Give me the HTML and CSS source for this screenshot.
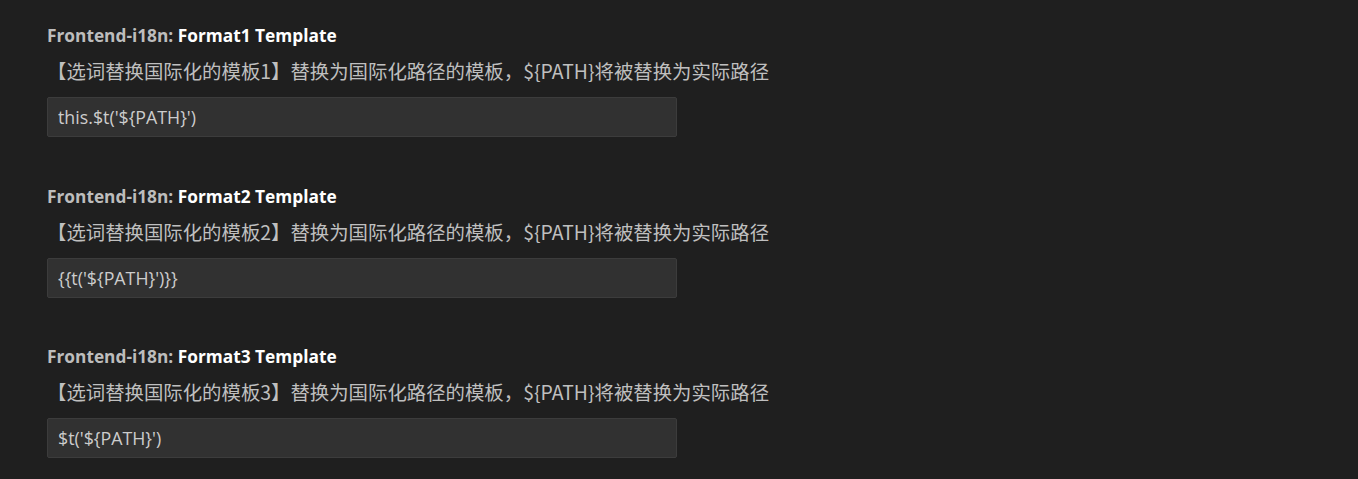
FILE: index.html
```html
<!DOCTYPE html>
<html lang="zh">
<head>
<meta charset="utf-8">
<title>Settings</title>
<link rel="stylesheet" href="styles.css">
</head>
<body>
<div class="settings">
  <div class="setting">
    <div class="setting-title"><span class="category">Frontend-i18n: </span><span class="name">Format1 Template</span></div>
    <div class="setting-desc">【选词替换国际化的模板1】替换为国际化路径的模板，${PATH}将被替换为实际路径</div>
    <div class="setting-input"><input class="text-input" type="text" value="this.$t('${PATH}')"></div>
  </div>
  <div class="setting">
    <div class="setting-title"><span class="category">Frontend-i18n: </span><span class="name">Format2 Template</span></div>
    <div class="setting-desc">【选词替换国际化的模板2】替换为国际化路径的模板，${PATH}将被替换为实际路径</div>
    <div class="setting-input"><input class="text-input" type="text" value="{{t('${PATH}')}}"></div>
  </div>
  <div class="setting">
    <div class="setting-title"><span class="category">Frontend-i18n: </span><span class="name">Format3 Template</span></div>
    <div class="setting-desc">【选词替换国际化的模板3】替换为国际化路径的模板，${PATH}将被替换为实际路径</div>
    <div class="setting-input"><input class="text-input" type="text" value="$t('${PATH}')"></div>
  </div>
</div>
</body>
</html>
```
FILE: styles.css
```css
html, body {
  margin: 0;
  padding: 0;
  background: #1f1f1f;
  height: 100%;
  overflow: hidden;
}
.settings {
  display: flex;
  flex-direction: column;
  gap: 47.5px;
  padding: 24px 0 0 47px;
}
.setting {
  display: flex;
  flex-direction: column;
}
.setting-title {
  font-family: "Open Sans", "Noto Sans CJK SC", sans-serif;
  font-weight: 700;
  font-size: 17.3px;
  line-height: 24px;
  white-space: nowrap;
}
.category {
  color: #bdbdbd;
}
.name {
  color: #ffffff;
}
.setting-desc {
  margin-top: 11px;
  font-family: "Noto Sans CJK SC", sans-serif;
  font-size: 19.4px;
  line-height: 24px;
  height: 24px;
  color: #bfbfbf;
  white-space: nowrap;
}
.setting-input {
  margin-top: 14px;
}
.text-input {
  display: block;
  box-sizing: border-box;
  width: 630px;
  height: 40px;
  margin: 0;
  padding: 0 10px;
  background: #313131;
  border: 1px solid #3c3c3c;
  border-radius: 2px;
  color: #cccccc;
  font-family: "Open Sans", sans-serif;
  font-size: 17.8px;
  outline: none;
}
```
